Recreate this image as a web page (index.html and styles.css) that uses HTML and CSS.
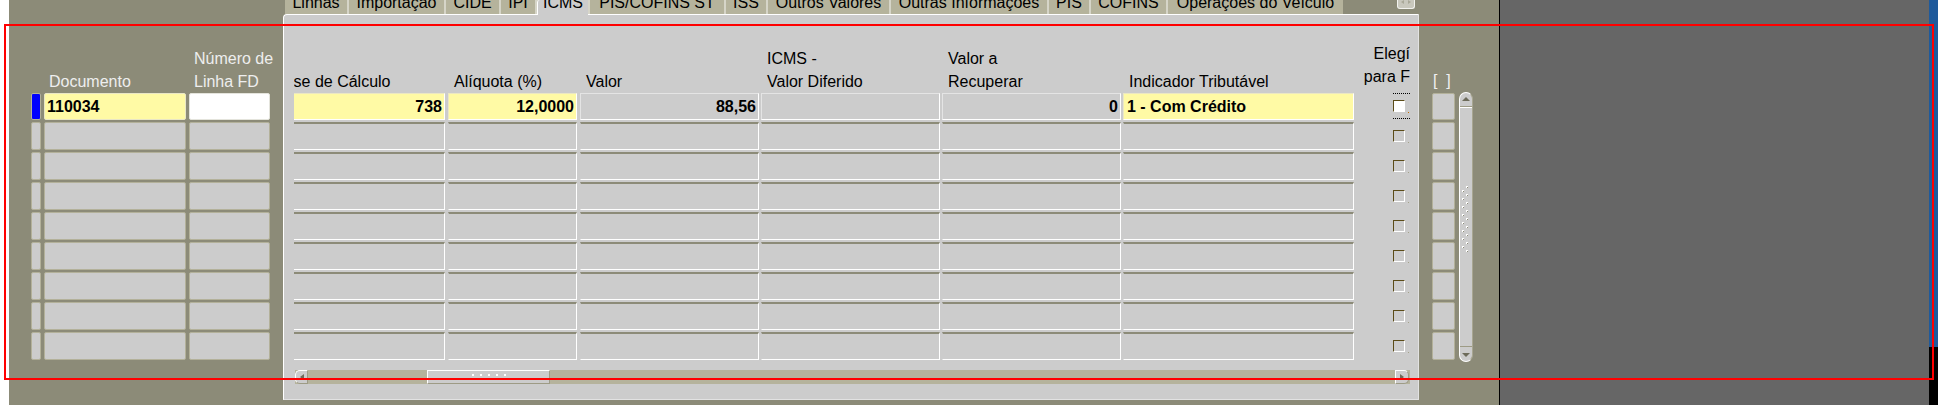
FILE: index.html
```html
<!DOCTYPE html>
<html lang="pt-BR">
<head>
<meta charset="utf-8">
<title>ICMS</title>
<link rel="stylesheet" href="styles.css">
</head>
<body>
<div class="screen">
  <div class="edge-left"></div>
  <div class="form">
    <div class="left-block">
      <div class="lhead">
        <div class="lh-ind"></div>
        <div class="lh-doc">Documento</div>
        <div class="lh-fd">Número de<br>Linha FD</div>
      </div>
      <div class="rows">
        <div class="row first"><div class="ind cur"></div><div class="lcell doc yel">110034</div><div class="lcell fd wht"></div></div>
        <div class="row"><div class="ind"></div><div class="lcell doc"></div><div class="lcell fd"></div></div>
        <div class="row"><div class="ind"></div><div class="lcell doc"></div><div class="lcell fd"></div></div>
        <div class="row"><div class="ind"></div><div class="lcell doc"></div><div class="lcell fd"></div></div>
        <div class="row"><div class="ind"></div><div class="lcell doc"></div><div class="lcell fd"></div></div>
        <div class="row"><div class="ind"></div><div class="lcell doc"></div><div class="lcell fd"></div></div>
        <div class="row"><div class="ind"></div><div class="lcell doc"></div><div class="lcell fd"></div></div>
        <div class="row"><div class="ind"></div><div class="lcell doc"></div><div class="lcell fd"></div></div>
        <div class="row"><div class="ind"></div><div class="lcell doc"></div><div class="lcell fd"></div></div>
      </div>
    </div>

    <div class="canvas">
      <div class="tabstrip">
        <div class="tabs">
          <div class="tab t-linhas">Linhas</div>
          <div class="tab t-imp">Importação</div>
          <div class="tab t-cide">CIDE</div>
          <div class="tab t-ipi">IPI</div>
          <div class="tab t-icms active">ICMS</div>
          <div class="tab t-pcst">PIS/COFINS ST</div>
          <div class="tab t-iss">ISS</div>
          <div class="tab t-ov">Outros Valores</div>
          <div class="tab t-oi">Outras Informações</div>
          <div class="tab t-pis">PIS</div>
          <div class="tab t-cof">COFINS</div>
          <div class="tab t-opv">Operações do Veículo</div>
        </div>
        <div class="tabscroll">
          <svg width="16" height="8" viewBox="0 0 16 8"><path d="M3 2 L6 0 L6 4 Z" fill="#a9a898"/><path d="M10 0 L13 2 L10 4 Z" fill="#a9a898"/></svg>
        </div>
      </div>
      <div class="panel">
        <div class="viewport">
          <div class="content">
            <div class="hrow">
              <div class="col c-base">Base de Cálculo</div>
              <div class="col c-aliq">Alíquota (%)</div>
              <div class="col c-valor">Valor</div>
              <div class="col c-dif">ICMS -<br>Valor Diferido</div>
              <div class="col c-rec">Valor a<br>Recuperar</div>
              <div class="col c-ind">Indicador Tributável</div>
              <div class="col c-chk hchk">Elegí<br>para F</div>
            </div>
            <div class="rows">
              <div class="row first">
                <div class="dc c-base y">738</div>
                <div class="dc c-aliq y">12,0000</div>
                <div class="dc c-valor">88,56</div>
                <div class="dc c-dif"></div>
                <div class="dc c-rec">0</div>
                <div class="dc c-ind y tl">1 - Com Crédito</div>
                <div class="chk"><div class="focus"><span class="box on"></span><span class="dot or"></span></div></div>
              </div>
              <div class="row"><div class="dc c-base"></div><div class="dc c-aliq"></div><div class="dc c-valor"></div><div class="dc c-dif"></div><div class="dc c-rec"></div><div class="dc c-ind"></div><div class="chk"><span class="box"></span><span class="dot"></span></div></div>
              <div class="row"><div class="dc c-base"></div><div class="dc c-aliq"></div><div class="dc c-valor"></div><div class="dc c-dif"></div><div class="dc c-rec"></div><div class="dc c-ind"></div><div class="chk"><span class="box"></span><span class="dot"></span></div></div>
              <div class="row"><div class="dc c-base"></div><div class="dc c-aliq"></div><div class="dc c-valor"></div><div class="dc c-dif"></div><div class="dc c-rec"></div><div class="dc c-ind"></div><div class="chk"><span class="box"></span><span class="dot"></span></div></div>
              <div class="row"><div class="dc c-base"></div><div class="dc c-aliq"></div><div class="dc c-valor"></div><div class="dc c-dif"></div><div class="dc c-rec"></div><div class="dc c-ind"></div><div class="chk"><span class="box"></span><span class="dot"></span></div></div>
              <div class="row"><div class="dc c-base"></div><div class="dc c-aliq"></div><div class="dc c-valor"></div><div class="dc c-dif"></div><div class="dc c-rec"></div><div class="dc c-ind"></div><div class="chk"><span class="box"></span><span class="dot"></span></div></div>
              <div class="row"><div class="dc c-base"></div><div class="dc c-aliq"></div><div class="dc c-valor"></div><div class="dc c-dif"></div><div class="dc c-rec"></div><div class="dc c-ind"></div><div class="chk"><span class="box"></span><span class="dot"></span></div></div>
              <div class="row"><div class="dc c-base"></div><div class="dc c-aliq"></div><div class="dc c-valor"></div><div class="dc c-dif"></div><div class="dc c-rec"></div><div class="dc c-ind"></div><div class="chk"><span class="box"></span><span class="dot"></span></div></div>
              <div class="row"><div class="dc c-base"></div><div class="dc c-aliq"></div><div class="dc c-valor"></div><div class="dc c-dif"></div><div class="dc c-rec"></div><div class="dc c-ind"></div><div class="chk"><span class="box"></span><span class="dot"></span></div></div>
            </div>
          </div>
        </div>
        <div class="hscroll">
          <div class="hs-btn l"><span class="tri-l"></span></div>
          <div class="hs-thumb">
            <svg width="36" height="8" viewBox="0 0 36 8"><g fill="#ffffff"><rect x="1" y="1" width="2" height="2"/><rect x="9" y="1" width="2" height="2"/><rect x="17" y="1" width="2" height="2"/><rect x="25" y="1" width="2" height="2"/><rect x="33" y="1" width="2" height="2"/></g><g fill="#9d9b85"><rect x="2" y="6" width="1" height="1"/><rect x="10" y="6" width="1" height="1"/><rect x="18" y="6" width="1" height="1"/><rect x="26" y="6" width="1" height="1"/><rect x="34" y="6" width="1" height="1"/></g></svg>
          </div>
          <div class="hs-btn r"><span class="tri-r"></span></div>
        </div>
      </div>
    </div>

    <div class="right-block">
      <div class="rhead">[&nbsp; ]</div>
      <div class="rbody">
        <div class="rows rbtns">
          <div class="row first"><div class="rbtn"></div></div>
          <div class="row"><div class="rbtn"></div></div>
          <div class="row"><div class="rbtn"></div></div>
          <div class="row"><div class="rbtn"></div></div>
          <div class="row"><div class="rbtn"></div></div>
          <div class="row"><div class="rbtn"></div></div>
          <div class="row"><div class="rbtn"></div></div>
          <div class="row"><div class="rbtn"></div></div>
          <div class="row"><div class="rbtn"></div></div>
        </div>
        <div class="vscroll">
          <div class="vs-up"><span class="tri-u"></span></div>
          <div class="vs-track">
            <svg class="grip" width="9" height="66" viewBox="0 0 9 66">
              <defs>
                <pattern id="gp" width="9" height="8" patternUnits="userSpaceOnUse">
                  <rect x="5" y="0" width="2" height="1" fill="#ffffff"/>
                  <rect x="5" y="1" width="1" height="1" fill="#ffffff"/>
                  <rect x="6" y="1" width="1" height="1" fill="#8c8b78"/>
                  <rect x="1" y="4" width="2" height="1" fill="#ffffff"/>
                  <rect x="1" y="5" width="1" height="1" fill="#ffffff"/>
                  <rect x="2" y="5" width="1" height="1" fill="#8c8b78"/>
                </pattern>
              </defs>
              <rect width="9" height="66" fill="url(#gp)"/>
            </svg>
          </div>
          <div class="vs-down"><span class="tri-d"></span></div>
        </div>
      </div>
    </div>
  </div>
  <div class="divider"></div>
  <div class="desktop"></div>
  <div class="edge-right"><div class="er-blue"></div><div class="er-black"></div></div>
</div>
<div class="annot"></div>
</body>
</html>
```

FILE: styles.css
```css
* { box-sizing: border-box; margin: 0; padding: 0; }
html, body { width: 1938px; height: 405px; overflow: hidden; }
body {
  font-family: "Liberation Sans", Arial, sans-serif;
  font-size: 16px;
  color: #000;
  background: #666666;
  position: relative;
}

.screen { display: flex; height: 405px; }
.edge-left { width: 9px; flex: none; background: #ffffff; }
.form { width: 1490px; flex: none; display: flex; background: #8c8b78; }
.divider { width: 1px; flex: none; background: #000; }
.desktop { width: 429px; flex: none; background: #666666; }
.edge-right { width: 9px; flex: none; display: flex; flex-direction: column; }
.er-blue { height: 347px; flex: none; background: #1f5a9b; }
.er-black { flex: 1; background: #000; }

/* shared rows */
.rows { display: flex; flex-direction: column; gap: 2px; }
.row { display: flex; height: 28px; flex: none; }
.row.first { height: 27px; }

/* left block */
.left-block { width: 274px; flex: none; padding-left: 22px; }
.lhead {
  height: 93px; display: flex; align-items: flex-end;
  line-height: 23px; color: #eeeeee; white-space: nowrap;
}
.lh-ind { width: 13px; flex: none; }
.lh-doc { width: 145px; flex: none; padding-left: 5px; }
.lh-fd { width: 81px; flex: none; padding-left: 5px; }
.left-block .row { gap: 3px; }
.ind {
  width: 10px; flex: none;
  border: 1px solid #b3b19a; border-radius: 2px; background: #cccccc;
}
.ind.cur { background: #0000ff; }
.lcell {
  flex: none; border: 1px solid #b3b19a; border-radius: 2px; background: #cccccc;
  font-weight: bold; line-height: 25px; padding-left: 2px;
  white-space: nowrap; overflow: hidden;
}
.lcell.doc { width: 142px; }
.lcell.fd { width: 81px; }
.lcell.yel { background: #fffaa5; border-color: #e9e6c6; }
.lcell.wht { background: #ffffff; border-color: #e4e4dc; }

/* canvas with tabs */
.canvas { width: 1136px; flex: none; display: flex; flex-direction: column; }
.tabstrip { height: 14px; flex: none; display: flex; align-items: flex-start; }
.tabs { display: flex; gap: 2px; margin-left: 2px; height: 14px; background: #d6d5c8; }
.tab {
  height: 14px; flex: none; background: #b5b39c;
  line-height: 5px; text-align: center; white-space: nowrap; overflow: hidden;
}
.tab.active {
  background: #cccccc; height: 15px;
  border-left: 1px solid #ffffff; border-top-left-radius: 3px;
  position: relative; z-index: 1;
}
.t-linhas { width: 62px; }
.t-imp { width: 95px; }
.t-cide { width: 53px; }
.t-ipi { width: 34px; }
.t-icms { width: 51px; }
.t-pcst { width: 134px; }
.t-iss { width: 40px; }
.t-ov { width: 121px; }
.t-oi { width: 156px; }
.t-pis { width: 40px; }
.t-cof { width: 75px; }
.t-opv { width: 175px; }
.tabscroll {
  margin-left: 54px; width: 18px; height: 9px; flex: none;
  background: #c9c8bd; border: 1px solid #f2f2ee; border-top: none;
  border-radius: 0 0 3px 3px;
  display: flex; align-items: flex-start; justify-content: center;
}
.tabscroll svg { display: block; }

.panel {
  height: 386px; flex: none; background: #cccccc;
  border: 1px solid #ffffff; border-right-color: #e2e2e2; border-bottom-color: #e2e2e2;
  border-top-left-radius: 4px;
  padding-left: 10px;
}
.viewport { width: 1116px; height: 347px; overflow: hidden; }
.content { margin-left: -26px; }

.hrow {
  height: 78px; display: flex; align-items: flex-end;
  line-height: 23px; white-space: nowrap;
}
.hrow .col { padding-left: 6px; overflow: hidden; }
.hrow .hchk { padding-left: 0; text-align: right; padding-bottom: 5px; }

.c-base { width: 177px; margin-right: 3px; flex: none; }
.c-aliq { width: 129px; margin-right: 3px; flex: none; }
.c-valor { width: 179px; margin-right: 2px; flex: none; }
.c-dif { width: 179px; margin-right: 2px; flex: none; }
.c-rec { width: 179px; margin-right: 2px; flex: none; }
.c-ind { width: 231px; flex: none; }
.c-chk { width: 56px; flex: none; }

.dc {
  background: #cccccc;
  border-style: solid; border-width: 2px 1px 1px 1px;
  border-color: #8c8b78 #ffffff #ffffff #cccccc;
  font-weight: bold; line-height: 25px; padding-right: 2px;
  text-align: right; white-space: nowrap; overflow: hidden;
}
.row.first .dc { border-width: 1px; border-color: #e4e4e4 #ffffff #ffffff #e4e4e4; }
.dc.y { background: #fffaa5; }
.row.first .dc.y { border-color: #ebe7c4 #ffffff #ffffff #ebe7c4; }
.dc.tl { text-align: left; padding-left: 3px; }

.chk {
  width: 56px; flex: none; padding-left: 39px; padding-top: 8px;
  display: flex; align-items: flex-start;
}
.row.first .chk { padding-top: 0; }
.focus {
  width: 17px; height: 26px; flex: none;
  border-top: 1px dotted #000; border-bottom: 1px dotted #000;
  padding-top: 6px; display: flex; align-items: flex-start;
}
.box {
  width: 12px; height: 12px; flex: none;
  border-style: solid; border-width: 1px;
  border-color: #5b4b17 #ffffff #ffffff #5b4b17;
}
.box.on { background: #ffffff; }
.dot { width: 1px; height: 1px; flex: none; margin: 12px 0 0 3px; background: #a5a38c; }
.dot.or { background: #c66a00; }

/* horizontal scrollbar */
.hscroll {
  margin: 8px 0 0 1px; width: 1115px; height: 14px;
  display: flex; background: #b5b39c;
}
.hs-btn {
  width: 14px; flex: none; background: #cccccc;
  border: 1px solid #ffffff; border-right-color: #9d9b85; border-bottom-color: #9d9b85;
  display: flex; align-items: center; justify-content: center;
}
.hs-btn.l { width: 13px; border-radius: 5px 0 0 5px; }
.hs-btn.r { border-radius: 0 5px 5px 0; margin-left: auto; margin-right: 1px; }
.hs-thumb {
  width: 123px; flex: none; margin-left: 119px; background: #cccccc;
  border: 1px solid #ffffff; border-right-color: #9d9b85; border-bottom-color: #9d9b85;
  display: flex; align-items: center; justify-content: center;
}
.hs-thumb svg { display: block; }
.tri-l { width: 0; height: 0; border-top: 3px solid transparent; border-bottom: 3px solid transparent; border-right: 4px solid #6d6b5a; }
.tri-r { width: 0; height: 0; border-top: 3px solid transparent; border-bottom: 3px solid transparent; border-left: 4px solid #6d6b5a; }
.tri-u { width: 0; height: 0; border-left: 4px solid transparent; border-right: 4px solid transparent; border-bottom: 4px solid #6d6b5a; }
.tri-d { width: 0; height: 0; border-left: 4px solid transparent; border-right: 4px solid transparent; border-top: 4px solid #6d6b5a; }

/* right block */
.right-block { width: 80px; flex: none; padding-left: 13px; }
.rhead {
  height: 93px; display: flex; align-items: flex-end;
  padding: 0 0 1px 1px; line-height: 23px; color: #f0f0f0; white-space: nowrap;
}
.rbody { display: flex; gap: 4px; align-items: flex-start; }
.rbtns { width: 23px; flex: none; }
.rbtn { width: 23px; border: 1px solid #b3b19a; border-radius: 2px; background: #cccccc; }
.vscroll {
  width: 14px; height: 270px; flex: none; margin-top: -1px;
  display: flex; flex-direction: column;
  background: #cccccc; border: 1px solid #ffffff; border-right-color: #a8a691;
  border-radius: 7px;
}
.vs-up {
  height: 14px; flex: none; border-bottom: 1px solid #9d9b85;
  display: flex; justify-content: center; align-items: flex-start; padding-top: 4px;
}
.vs-track { flex: 1; border-top: 1px solid #ffffff; padding: 78px 0 0 1px; }
.grip { display: block; }
.vs-down {
  height: 15px; flex: none; border-top: 1px solid #9d9b85;
  display: flex; justify-content: center; align-items: flex-start; padding-top: 6px;
}

.annot {
  position: absolute; left: 4px; top: 24px; width: 1930px; height: 356px;
  border: 2px solid #ff0000; pointer-events: none;
}
```
